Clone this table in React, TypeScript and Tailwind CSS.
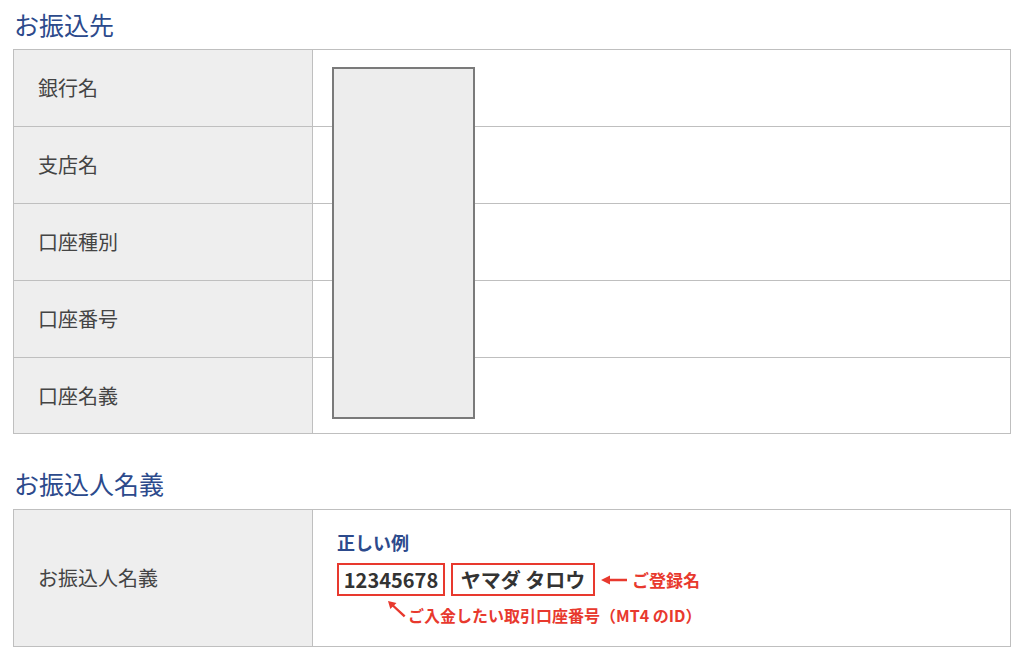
import React from 'react';

const FONT = "font-['Noto_Sans_CJK_JP','Noto_Sans',sans-serif]";

const accountRows = ['銀行名', '支店名', '口座種別', '口座番号', '口座名義'];

const SectionTitle: React.FC<{ children: React.ReactNode; className?: string }> = ({ children, className }) => (
  <h2 className={`pl-[14px] text-[25px] leading-[32px] font-normal text-[#2c4a8c] ${className ?? ''}`}>{children}</h2>
);

const ArrowLeft: React.FC = () => (
  <svg width="28" height="12" viewBox="0 0 28 12" className="shrink-0">
    <path d="M1 6 L10 1.5 L10 4.8 L27 4.8 L27 7.2 L10 7.2 L10 10.5 Z" fill="#e8392e" />
  </svg>
);

const ArrowUpLeft: React.FC = () => (
  <svg width="20" height="18" viewBox="0 0 20 18" className="shrink-0">
    <path d="M1 1 L9.5 3 L7.2 5.2 L18.5 15.5 L16.8 17.2 L5.6 6.8 L3.3 9 Z" fill="#e8392e" />
  </svg>
);

export default function App() {
  return (
    <div className={`w-[1024px] h-[660px] bg-white ${FONT} overflow-hidden`}>
      <div className="h-[49px] pt-[8px]">
        <SectionTitle>お振込先</SectionTitle>
      </div>

      {/* 振込先テーブル */}
      <div className="relative ml-[13px] w-[998px] border border-[#bfbfbf]">
        {accountRows.map((label, i) => (
          <div
            key={label}
            className={`flex ${i < accountRows.length - 1 ? 'h-[77px] border-b border-[#bfbfbf]' : 'h-[75px]'}`}
          >
            <div className="w-[299px] shrink-0 bg-[#eeeeee] border-r border-[#bfbfbf] flex items-center pl-[24px] text-[20px] text-[#444444]">
              {label}
            </div>
            <div className="flex-1 bg-white" />
          </div>
        ))}
        {/* 伏せ字ボックス */}
        <div className="absolute left-[318px] top-[17px] w-[143px] h-[352px] bg-[#ededed] border-2 border-[#7a7a7a]" />
      </div>

      <div className="h-[75px] pt-[33px]">
        <SectionTitle>お振込人名義</SectionTitle>
      </div>

      {/* 振込人名義テーブル */}
      <div className="ml-[13px] w-[998px] h-[138px] border border-[#bfbfbf] flex">
        <div className="w-[299px] shrink-0 bg-[#eeeeee] border-r border-[#bfbfbf] flex items-center pl-[24px] text-[20px] text-[#444444]">
          お振込人名義
        </div>
        <div className="flex-1 pl-[24px] pt-[21px]">
          <div className="text-[18px] leading-[22px] font-bold text-[#2c4a8c]">正しい例</div>
          <div className="mt-[10px] flex items-center">
            <div className="h-[33px] w-[108px] border-2 border-[#e8392e] flex items-center justify-center text-[20px] font-bold text-[#333333]">
              12345678
            </div>
            <div className="ml-[6px] h-[33px] w-[144px] border-2 border-[#e8392e] flex items-center justify-center text-[20px] font-bold text-[#333333]">
              ヤマダ タロウ
            </div>
            <div className="ml-[5px]">
              <ArrowLeft />
            </div>
            <span className="ml-[4px] text-[17px] font-bold text-[#e8392e]">ご登録名</span>
          </div>
          <div className="flex items-start pl-[50px] mt-[4px]">
            <ArrowUpLeft />
            <span className="ml-[1px] mt-[5px] text-[16px] leading-[20px] font-bold text-[#e8392e]">
              ご入金したい取引口座番号（MT4 のID）
            </span>
          </div>
        </div>
      </div>
    </div>
  );
}
